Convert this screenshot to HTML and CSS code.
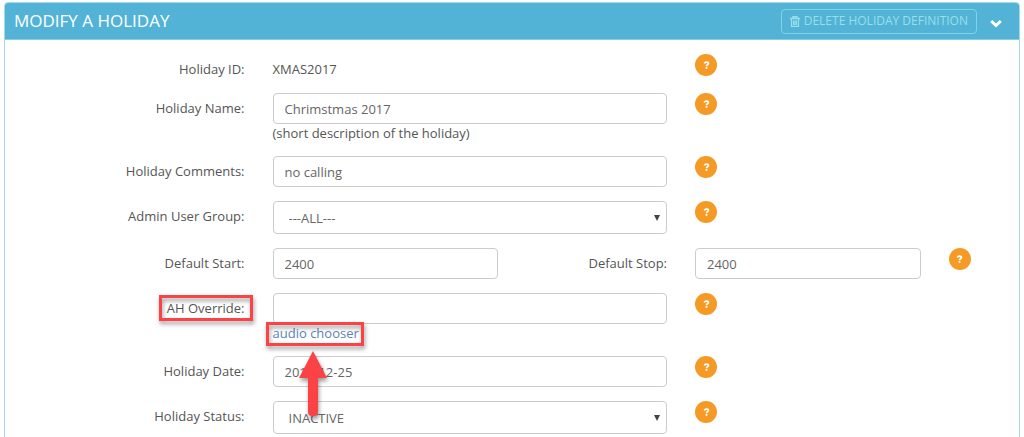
FILE: index.html
```html
<!DOCTYPE html>
<html lang="en">
<head>
  <meta charset="UTF-8">
  <meta name="viewport" content="width=device-width, initial-scale=1.0">
  <title>Modify a Holiday</title>
  <link rel="stylesheet" href="styles.css">
</head>
<body>
  <svg width="0" height="0" class="sprite" aria-hidden="true">
    <symbol id="question" viewBox="0 0 8 9">
      <path d="M1.5 2.7C1.9 1.6 2.8 1.1 3.9 1.1c1.400 0 2.300.7 2.300 1.700 0 1.500-2.200 1.300-2.200 3" fill="none" stroke="currentColor" stroke-width="2"/>
      <path d="M3 6.800h2v2H3z" fill="currentColor"/>
    </symbol>
  </svg>
  <div class="panel">
    <div class="panel-heading">
      <h1 class="panel-title">MODIFY A HOLIDAY</h1>
      <button type="button" class="delete-btn">
        <svg class="trash" viewBox="0 0 10 11" aria-hidden="true">
          <path d="M3 2V.7h4V2M0 2.500h10" fill="none" stroke="currentColor" stroke-width="1.500"/>
          <path d="M1.500 3v7.300h7V3M3.500 4.500V9M5 4.500V9M6.500 4.500V9" fill="none" stroke="currentColor" stroke-width="1.200"/>
        </svg>
        DELETE HOLIDAY DEFINITION
      </button>
      <button type="button" class="collapse-btn" aria-label="Collapse">
        <svg viewBox="0 0 12 9" aria-hidden="true"><path d="M1.2 2 6 6.5 10.8 2" fill="none" stroke="currentColor" stroke-width="3"/></svg>
      </button>
    </div>
    <form class="panel-body">
      <div class="form-row">
        <div class="label">Holiday ID:</div>
        <div class="field static">XMAS2017</div>
        <div class="help"><button type="button" class="help-btn" aria-label="Help"><svg><use href="#question"/></svg></button></div>
      </div>
      <div class="form-row">
        <label class="label" for="holidayName">Holiday Name:</label>
        <div class="field">
          <input type="text" id="holidayName" class="control" value="Chrimstmas 2017">
          <div class="hint">(short description of the holiday)</div>
        </div>
        <div class="help"><button type="button" class="help-btn" aria-label="Help"><svg><use href="#question"/></svg></button></div>
      </div>
      <div class="form-row">
        <label class="label" for="holidayComments">Holiday Comments:</label>
        <div class="field"><input type="text" id="holidayComments" class="control" value="no calling"></div>
        <div class="help"><button type="button" class="help-btn" aria-label="Help"><svg><use href="#question"/></svg></button></div>
      </div>
      <div class="form-row">
        <label class="label" for="userGroup">Admin User Group:</label>
        <div class="field">
          <select id="userGroup" class="control">
            <option>---ALL---</option>
          </select>
        </div>
        <div class="help"><button type="button" class="help-btn" aria-label="Help"><svg><use href="#question"/></svg></button></div>
      </div>
      <div class="form-row">
        <label class="label" for="defaultStart">Default Start:</label>
        <div class="field half"><input type="text" id="defaultStart" class="control" value="2400"></div>
        <label class="label narrow" for="defaultStop">Default Stop:</label>
        <div class="field half"><input type="text" id="defaultStop" class="control" value="2400"></div>
        <div class="help"><button type="button" class="help-btn" aria-label="Help"><svg><use href="#question"/></svg></button></div>
      </div>
      <div class="form-row">
        <label class="label" for="ahOverride"><span class="marked">AH Override:<span class="mark-box"></span></span></label>
        <div class="field">
          <input type="text" id="ahOverride" class="control">
          <div class="hint">
            <span class="marked"><a href="#">audio chooser</a><span class="mark-box"></span>
              <svg class="mark-arrow" viewBox="0 0 30 68" aria-hidden="true">
                <path d="M15 1 29 28H20V62a4 4 0 0 1-4 4h-2a4 4 0 0 1-4-4V28H1Z" fill="#fb4346"/>
              </svg>
            </span>
          </div>
        </div>
        <div class="help"><button type="button" class="help-btn" aria-label="Help"><svg><use href="#question"/></svg></button></div>
      </div>
      <div class="form-row">
        <label class="label" for="holidayDate">Holiday Date:</label>
        <div class="field"><input type="text" id="holidayDate" class="control" value="2017-12-25"></div>
        <div class="help"><button type="button" class="help-btn" aria-label="Help"><svg><use href="#question"/></svg></button></div>
      </div>
      <div class="form-row">
        <label class="label" for="holidayStatus">Holiday Status:</label>
        <div class="field">
          <select id="holidayStatus" class="control">
            <option>INACTIVE</option>
            <option>ACTIVE</option>
          </select>
        </div>
        <div class="help"><button type="button" class="help-btn" aria-label="Help"><svg><use href="#question"/></svg></button></div>
      </div>
    </form>
  </div>
</body>
</html>
```
FILE: styles.css
```css
* {
  box-sizing: border-box;
}
body {
  margin: 0;
  padding: 2px 4px 0;
  font-family: "Open Sans", "Noto Sans", sans-serif;
  font-size: 13px;
  line-height: 18px;
  color: #555;
  background: #fff;
  /* the panel runs on past the bottom of the window */
  overflow: hidden;
}
button, input, select {
  font: inherit;
}
.sprite {
  display: none;
}
.panel {
  border: 1px solid #a5daeb;
  border-radius: 4px;
}
.panel-heading {
  display: flex;
  align-items: center;
  height: 37px;
  padding: 0 17px 0 9px;
  color: #fff;
  background: #52b3d6;
  border-bottom: 1px solid #86cde3;
  border-radius: 3px 3px 0 0;
}
.panel-title {
  flex: 1;
  margin: 0;
  font-size: 17px;
  font-weight: 400;
}
.delete-btn {
  display: flex;
  align-items: center;
  gap: 4px;
  height: 25px;
  padding: 0 8px;
  font-size: 12px;
  color: #98dfea;
  background: transparent;
  border: 1px solid #80d4e4;
  border-radius: 4px;
}
.trash {
  width: 10px;
  height: 11px;
}
.collapse-btn {
  display: flex;
  margin-left: 13px;
  padding: 4px 0 0;
  color: #fff;
  background: none;
  border: 0;
}
.collapse-btn svg {
  width: 12px;
  height: 9px;
}
.panel-body {
  padding-top: 14px;
}
/* 12 column form grid */
.form-row {
  display: grid;
  grid-template-columns: repeat(12, minmax(0, 1fr));
  align-items: start;
  margin-bottom: 14px;
}
.label, .field, .help {
  padding: 0 14px;
}
.label {
  grid-column: span 3;
  padding-top: 6px;
  text-align: right;
}
.label.narrow {
  grid-column: span 2;
}
.field {
  grid-column: span 5;
}
.field.half {
  grid-column: span 3;
}
.field.static {
  min-height: 25px;
  padding-top: 6px;
}
.control {
  display: block;
  width: 100%;
  height: 31px;
  padding: 1px 11px 0;
  color: #666;
  background: #fff;
  border: 1px solid #ccc;
  border-radius: 4px;
}
select.control {
  appearance: none;
  height: 33px;
  padding: 0 15px;
  background: #fff url("data:image/svg+xml,%3Csvg xmlns='http://www.w3.org/2000/svg' width='6' height='6'%3E%3Cpath d='M0 0h6L3 6z' fill='%23444'/%3E%3C/svg%3E") no-repeat right 6px center;
}
.help-btn {
  display: flex;
  align-items: center;
  justify-content: center;
  width: 22px;
  height: 22px;
  padding: 0;
  color: #fff;
  background: #f49a25;
  border: 0;
  border-radius: 50%;
}
.help-btn svg {
  width: 7px;
  height: 8px;
}
a {
  color: #5b83b5;
  text-decoration: none;
}
/* callouts drawn over the form */
.marked {
  position: relative;
}
.mark-box {
  position: absolute;
  inset: -4px -8px;
  border: 3px solid #fb4346;
  filter: drop-shadow(1px 3px 2px rgba(0, 0, 0, 0.4));
}
.hint .mark-box {
  inset: -2px -5px -4px -7px;
}
.mark-arrow {
  position: absolute;
  top: 26px;
  left: 25px;
  width: 30px;
  height: 68px;
  filter: drop-shadow(1px 3px 2px rgba(0, 0, 0, 0.4));
}
```
